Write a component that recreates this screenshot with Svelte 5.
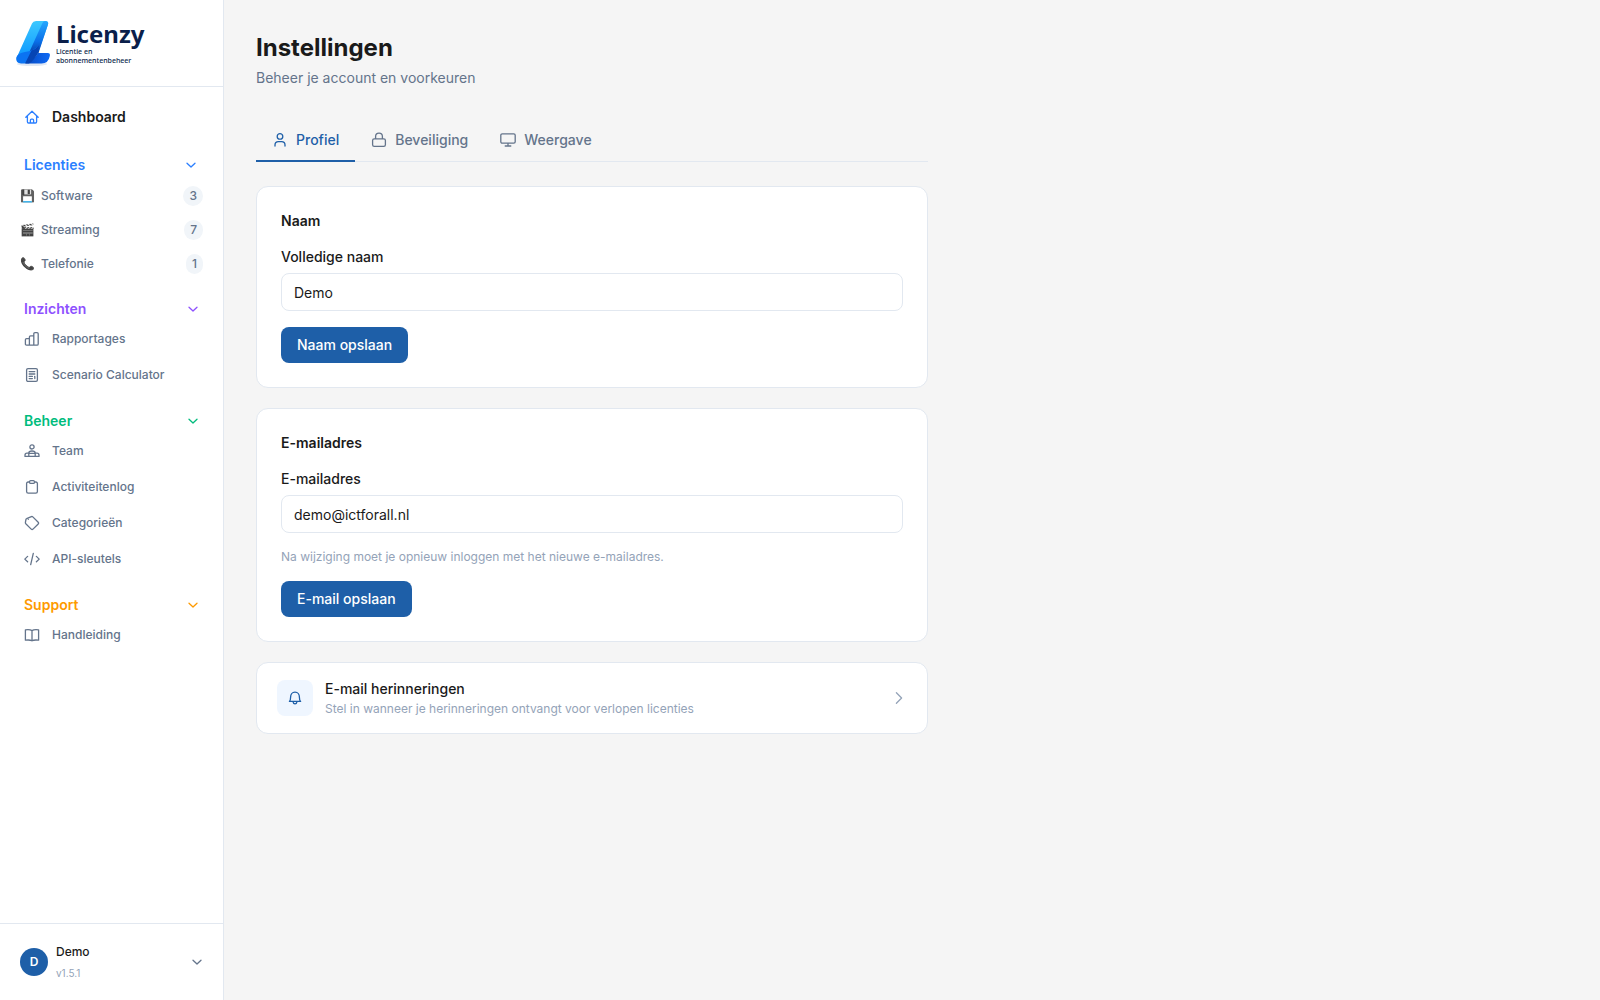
<script lang="ts">
  interface NavItem {
    label: string;
    icon?: string;
    emoji?: string;
    count?: number;
  }

  interface NavGroup {
    title: string;
    tone: string;
    items: NavItem[];
  }

  // 16x16 outline icons
  const icons: Record<string, string> = {
    home: 'M1.8 8.2 8 2.2l6.2 6M3.4 7v5.8c0 .8.4 1.2 1.2 1.2h6.8c.8 0 1.2-.4 1.2-1.2V7M6.4 14v-2.800c0-.6.4-1 1-1h1.200c.6 0 1 .4 1 1V14',
    chart: 'M1.400 8.800c0-.8.4-1.200 1.200-1.200h2.800v6.600H2.600c-.8 0-1.200-.4-1.200-1.200zM5.400 6c0-.8.4-1.200 1.200-1.200h3.200v9.400H5.400zM9.800 2.800c0-.8.4-1.200 1.200-1.200h2c.8 0 1.200.4 1.200 1.200V13c0 .8-.4 1.200-1.200 1.200H9.800z',
    calculator: 'M4 1.600h8c.8 0 1.400.6 1.400 1.400v10c0 .8-.6 1.400-1.400 1.400H4c-.8 0-1.400-.6-1.400-1.400V3c0-.8.6-1.400 1.400-1.400zM5.200 4.600h5.600M5.200 7h5.600M5.200 9.400h3.200M10.600 9.400h.2M5.200 11.600h3.200M10.800 9.600v2',
    team: 'M8 1.800a2.100 2.100 0 1 1 0 4.200 2.100 2.100 0 0 1 0-4.200zM4.800 13.400V10c0-1.200 1.200-2 3.200-2s3.200.8 3.200 2v3.400M1 13.400v-1.200c0-1.200.8-2 2-2h1.800M15 13.400v-1.200c0-1.200-.8-2-2-2h-1.800M4.800 10.400h6.400M1 13.400h14',
    clipboard: 'M5.600 3H4.200C3.200 3 2.600 3.600 2.600 4.600v8c0 1 .6 1.600 1.600 1.600h7.600c1 0 1.600-.6 1.600-1.600v-8c0-1-.6-1.600-1.600-1.600h-1.400M6.600 1.600h2.800c.6 0 1 .4 1 1v.8c0 .6-.4 1-1 1H6.600c-.6 0-1-.4-1-1v-.8c0-.6.4-1 1-1z',
    tag: 'M2.600 3.600 7.400 1.600c.5-.2 1-.1 1.400.3l5.400 5.300c.6.6.6 1.200 0 1.800l-5.200 5.100c-.6.6-1.200.6-1.800 0L1.800 8.800c-.4-.4-.5-.8-.4-1.300l.6-3.300c.1-.3.300-.5.600-.6zM4.300 4.300h.01',
    code: 'm3.600 5.400-2.800 2.700 2.800 2.700M12.400 5.400l2.800 2.700-2.800 2.700M9.300 2.400 6.700 13.600',
    book: 'M8 3.600C6.600 2.600 4.400 2.400 1.400 2.800v10.400c3-.4 5.200-.2 6.600.6 1.400-.8 3.600-1 6.600-.6V2.800C11.600 2.400 9.400 2.600 8 3.600zM8 3.600v10.200',
    user: 'M8 1.600a2.800 2.800 0 1 1 0 5.600 2.800 2.800 0 0 1 0-5.600zM3 14v-1c0-2.200 1.600-3.400 3.400-3.400h3.200C11.400 9.600 13 10.800 13 13v1',
    lock: 'M3.200 6.800h9.600c1 0 1.600.6 1.600 1.600v4.400c0 1-.6 1.600-1.600 1.600H3.200c-1 0-1.600-.6-1.600-1.600V8.400c0-1 .6-1.600 1.600-1.600zM4.600 6.800V4.600a3.400 3.400 0 0 1 6.800 0v2.200',
    monitor: 'M2.200 1.800h11.600c.8 0 1.400.6 1.400 1.400v6.600c0 .8-.6 1.400-1.400 1.400H2.200c-.8 0-1.400-.6-1.400-1.400V3.200c0-.8.6-1.400 1.400-1.400zM8 11.200v2.600M5.200 14h5.600',
    bell: 'M2.400 11.400h11.200c-1-1-1.200-1.600-1.200-4.200 0-3-1.600-5-4.400-5s-4.400 2-4.400 5c0 2.600-.2 3.200-1.200 4.200zM6 11.600c.2 1.600 1 2.200 2 2.200s1.800-.6 2-2.200',
    down: 'm4 6.200 4 3.800 4-3.800',
    right: 'm5.400 2.800 5.200 5.200-5.200 5.200'
  };

  const groups: NavGroup[] = [
    {
      title: 'Licenties',
      tone: 'blue',
      items: [
        { label: 'Software', emoji: '💾', count: 3 },
        { label: 'Streaming', emoji: '🎬', count: 7 },
        { label: 'Telefonie', emoji: '📞', count: 1 }
      ]
    },
    {
      title: 'Inzichten',
      tone: 'purple',
      items: [
        { label: 'Rapportages', icon: 'chart' },
        { label: 'Scenario Calculator', icon: 'calculator' }
      ]
    },
    {
      title: 'Beheer',
      tone: 'green',
      items: [
        { label: 'Team', icon: 'team' },
        { label: 'Activiteitenlog', icon: 'clipboard' },
        { label: 'Categorieën', icon: 'tag' },
        { label: 'API-sleutels', icon: 'code' }
      ]
    },
    {
      title: 'Support',
      tone: 'orange',
      items: [{ label: 'Handleiding', icon: 'book' }]
    }
  ];

  const tabs = [
    { id: 'profiel', label: 'Profiel', icon: 'user' },
    { id: 'beveiliging', label: 'Beveiliging', icon: 'lock' },
    { id: 'weergave', label: 'Weergave', icon: 'monitor' }
  ];

  let activeTab = $state('profiel');
  let closed = $state<string[]>([]);
  let name = $state('Demo');
  let email = $state('demo@ictforall.nl');

  function toggle(title: string) {
    closed = closed.includes(title) ? closed.filter(t => t !== title) : [...closed, title];
  }
</script>

{#snippet icon(id: string)}
  <svg class="icon" viewBox="0 0 16 16" aria-hidden="true"><path d={icons[id]} /></svg>
{/snippet}

<div class="app">
  <aside class="sidebar">
    <a class="logo" href="#home">
      <svg class="logo-mark" viewBox="0 0 34 46" aria-hidden="true">
        <defs>
          <linearGradient id="stem" x1="0" y1="0" x2="0" y2="1">
            <stop offset="0" stop-color="#3cc8ff" />
            <stop offset="1" stop-color="#0790ff" />
          </linearGradient>
          <linearGradient id="side" x1="0" y1="0" x2="0" y2="1">
            <stop offset="0" stop-color="#25a8ff" />
            <stop offset="0.6" stop-color="#0a6fe8" />
            <stop offset="1" stop-color="#063a9c" />
          </linearGradient>
          <linearGradient id="foot" x1="0" y1="0" x2="1" y2="0">
            <stop offset="0" stop-color="#0648c0" />
            <stop offset="1" stop-color="#0f6af5" />
          </linearGradient>
        </defs>
        <ellipse cx="16" cy="43" rx="15" ry="2" fill="#dfe7f3" />
        <path d="M16 2.500Q17 0 20 0h9.500Q33 0 32 3.500L22 32 12 42H4q-4-1-3.500-5z" fill="url(#stem)" />
        <path d="M26 3Q27 0 29 0q4 0 3 3.500L22.500 32 12 34z" fill="url(#side)" />
        <path d="M22 32h10q2.500 0 1.800 3-1.300 7.500-8.300 7.500H9Q17 40 22 32z" fill="url(#foot)" />
        <path d="M.5 36Q2 32 9 31q8-1 14-6.500L20 34 9 42.500H5Q-.5 42.500.5 36z" fill="#0b73f2" />
        <path d="M23 24.500Q20 28 15.500 29.500L9 42.500h4q5-3 9-10.500z" fill="#0644b4" />
      </svg>
      <span class="logo-text">
        <span class="logo-name">Licenzy</span>
        <span class="logo-tagline">Licentie en<br />abonnementenbeheer</span>
      </span>
    </a>

    <nav class="nav">
      <a class="nav-home" href="#dashboard">
        {@render icon('home')}
        <span>Dashboard</span>
      </a>

      {#each groups as group (group.title)}
        <section class="group">
          <button
            class="group-title {group.tone}"
            class:inset={group.title === 'Licenties'}
            aria-expanded={!closed.includes(group.title)}
            onclick={() => toggle(group.title)}
          >
            <span>{group.title}</span>
            {@render icon('down')}
          </button>
          {#if !closed.includes(group.title)}
            {#each group.items as item (item.label)}
              {#if item.emoji}
                <a class="category" href="#{item.label}">
                  <span class="emoji">{item.emoji}</span>
                  <span class="category-name">{item.label}</span>
                  <span class="count">{item.count}</span>
                </a>
              {:else}
                <a class="nav-item" href="#{item.label}">
                  {@render icon(item.icon ?? 'book')}
                  <span>{item.label}</span>
                </a>
              {/if}
            {/each}
          {/if}
        </section>
      {/each}
    </nav>

    <button class="account">
      <span class="avatar">D</span>
      <span class="account-text">
        <span class="account-name">Demo</span>
        <span class="version">v1.5.1</span>
      </span>
      {@render icon('down')}
    </button>
  </aside>

  <main class="main">
    <div class="content">
      <h1>Instellingen</h1>
      <p class="subtitle">Beheer je account en voorkeuren</p>

      <div class="tabs" role="tablist">
        {#each tabs as tab (tab.id)}
          <button
            class="tab"
            class:active={activeTab === tab.id}
            role="tab"
            aria-selected={activeTab === tab.id}
            onclick={() => (activeTab = tab.id)}
          >
            {@render icon(tab.icon)}
            <span>{tab.label}</span>
          </button>
        {/each}
      </div>

      <div class="cards">
        <form class="card" onsubmit={e => e.preventDefault()}>
          <h2>Naam</h2>
          <div class="field">
            <label for="name">Volledige naam</label>
            <input id="name" type="text" bind:value={name} />
          </div>
          <button class="save" type="submit">Naam opslaan</button>
        </form>

        <form class="card" onsubmit={e => e.preventDefault()}>
          <h2>E-mailadres</h2>
          <div class="field">
            <label for="email">E-mailadres</label>
            <input id="email" type="email" bind:value={email} />
          </div>
          <p class="hint">Na wijziging moet je opnieuw inloggen met het nieuwe e-mailadres.</p>
          <button class="save" type="submit">E-mail opslaan</button>
        </form>

        <a class="reminder" href="#herinneringen">
          <span class="reminder-icon">{@render icon('bell')}</span>
          <span class="reminder-text">
            <span class="reminder-title">E-mail herinneringen</span>
            <span class="hint">Stel in wanneer je herinneringen ontvangt voor verlopen licenties</span>
          </span>
          {@render icon('right')}
        </a>
      </div>
    </div>
  </main>
</div>

<style>
  :global(body) {
    background: #f5f5f5;
  }
  .app {
    display: flex;
    min-height: 100vh;
    font-family: Inter, "Liberation Sans", sans-serif;
    font-size: 14px;
    line-height: 20px;
    color: #1a1a1a;
    background: #f5f5f5;
  }
  .app *,
  .app {
    box-sizing: border-box;
  }
  a {
    color: inherit;
    text-decoration: none;
  }
  button {
    border: none;
    background: none;
    font: inherit;
    color: inherit;
    cursor: pointer;
    text-align: left;
  }
  h1,
  h2,
  p {
    margin: 0;
  }
  .icon {
    width: 16px;
    height: 16px;
    flex-shrink: 0;
    fill: none;
    stroke: currentColor;
    stroke-width: 1.3;
    stroke-linecap: round;
    stroke-linejoin: round;
  }

  /* Sidebar */
  .sidebar {
    display: flex;
    flex-direction: column;
    flex-shrink: 0;
    width: 224px;
    background: #fff;
    border-right: 1px solid #e2e8f0;
  }
  .logo {
    display: flex;
    gap: 6px;
    height: 87px;
    padding: 21px 16px;
    border-bottom: 1px solid #e2e8f0;
    color: #0b1f4b;
  }
  .logo-mark {
    width: 34px;
    height: 46px;
  }
  .logo-text {
    display: flex;
    flex-direction: column;
    font-family: "Noto Sans", sans-serif;
  }
  .logo-name {
    font-size: 24px;
    line-height: 26px;
    font-weight: 700;
  }
  .logo-tagline {
    font-size: 7px;
    line-height: 9px;
    font-weight: 500;
  }
  .nav {
    flex: 1;
    padding: 12px;
  }
  .nav-home,
  .nav-item {
    display: flex;
    align-items: center;
    gap: 12px;
    height: 36px;
    padding: 0 12px;
  }
  .nav-home {
    margin-bottom: 18px;
    font-weight: 600;
  }
  .nav-home .icon {
    color: #2b7fff;
  }
  .nav-item {
    font-size: 12px;
    font-weight: 500;
    color: #64748b;
  }
  .group {
    margin-bottom: 16px;
  }
  .group-title {
    display: flex;
    align-items: center;
    justify-content: space-between;
    width: 100%;
    height: 24px;
    padding: 0 10px 0 12px;
    font-weight: 600;
  }
  .group-title.inset {
    margin-bottom: 2px;
    padding-right: 12px;
  }
  .blue {
    color: #2b7fff;
  }
  .purple {
    color: #8e51ff;
  }
  .green {
    color: #00bc7d;
  }
  .orange {
    color: #fe9a00;
  }
  .category {
    display: flex;
    align-items: center;
    gap: 6px;
    height: 34px;
    padding: 0 8px;
    font-size: 12px;
    font-weight: 500;
    color: #64748b;
  }
  .emoji {
    width: 15px;
    font-size: 12px;
  }
  .category-name {
    flex: 1;
  }
  .count {
    padding: 0 6px;
    border-radius: 10px;
    background: #f1f5f9;
  }
  .account {
    display: flex;
    align-items: center;
    gap: 8px;
    height: 77px;
    padding: 0 18px 0 20px;
    border-top: 1px solid #e2e8f0;
  }
  .account .icon {
    color: #64748b;
  }
  .avatar {
    width: 28px;
    border-radius: 50%;
    background: #1e5fa8;
    color: #fff;
    font-size: 12px;
    line-height: 28px;
    font-weight: 600;
    text-align: center;
  }
  .account-text {
    display: flex;
    flex-direction: column;
    flex: 1;
    gap: 1px;
  }
  .account-name {
    font-size: 12px;
    font-weight: 500;
  }
  .version {
    font-size: 10px;
    color: #94a3b8;
  }

  /* Settings page */
  .main {
    flex: 1;
    padding: 32px;
  }
  .content {
    max-width: 672px;
  }
  h1 {
    font-size: 24px;
    line-height: 32px;
    font-weight: 700;
  }
  .subtitle {
    margin-top: 4px;
    color: #64748b;
  }
  .tabs {
    display: flex;
    margin-top: 32px;
    box-shadow: inset 0 -1px #e2e8f0;
  }
  .tab {
    display: flex;
    align-items: center;
    gap: 8px;
    padding: 10px 16px;
    border-bottom: 2px solid transparent;
    font-weight: 500;
    color: #64748b;
  }
  .tab.active {
    border-color: #1e5fa8;
    color: #1e5fa8;
  }
  .cards {
    display: flex;
    flex-direction: column;
    gap: 20px;
    margin-top: 24px;
  }
  .card,
  .reminder {
    background: #fff;
    border: 1px solid #e2e8f0;
    border-radius: 12px;
  }
  .card {
    display: flex;
    flex-direction: column;
    align-items: flex-start;
    gap: 16px;
    padding: 24px;
  }
  h2 {
    font-size: 14px;
    font-weight: 600;
  }
  .field {
    display: flex;
    flex-direction: column;
    gap: 6px;
    width: 100%;
  }
  label {
    font-weight: 500;
  }
  input {
    width: 100%;
    height: 38px;
    padding: 0 12px;
    border: 1px solid #e2e8f0;
    border-radius: 8px;
    background: #fff;
    font: inherit;
    color: inherit;
  }
  .hint {
    font-size: 12px;
    line-height: 16px;
    color: #94a3b8;
  }
  .save {
    padding: 8px 16px;
    border-radius: 8px;
    background: #1e5fa8;
    color: #fff;
    font-weight: 500;
  }
  .reminder {
    display: flex;
    align-items: center;
    gap: 12px;
    padding: 16px 20px;
  }
  .reminder > .icon {
    color: #94a3b8;
  }
  .reminder-icon {
    display: flex;
    align-items: center;
    justify-content: center;
    width: 36px;
    height: 36px;
    border-radius: 8px;
    background: #eff6ff;
    color: #1e5fa8;
  }
  .reminder-text {
    display: flex;
    flex-direction: column;
    flex: 1;
    gap: 2px;
  }
  .reminder-title {
    font-weight: 500;
  }
</style>
